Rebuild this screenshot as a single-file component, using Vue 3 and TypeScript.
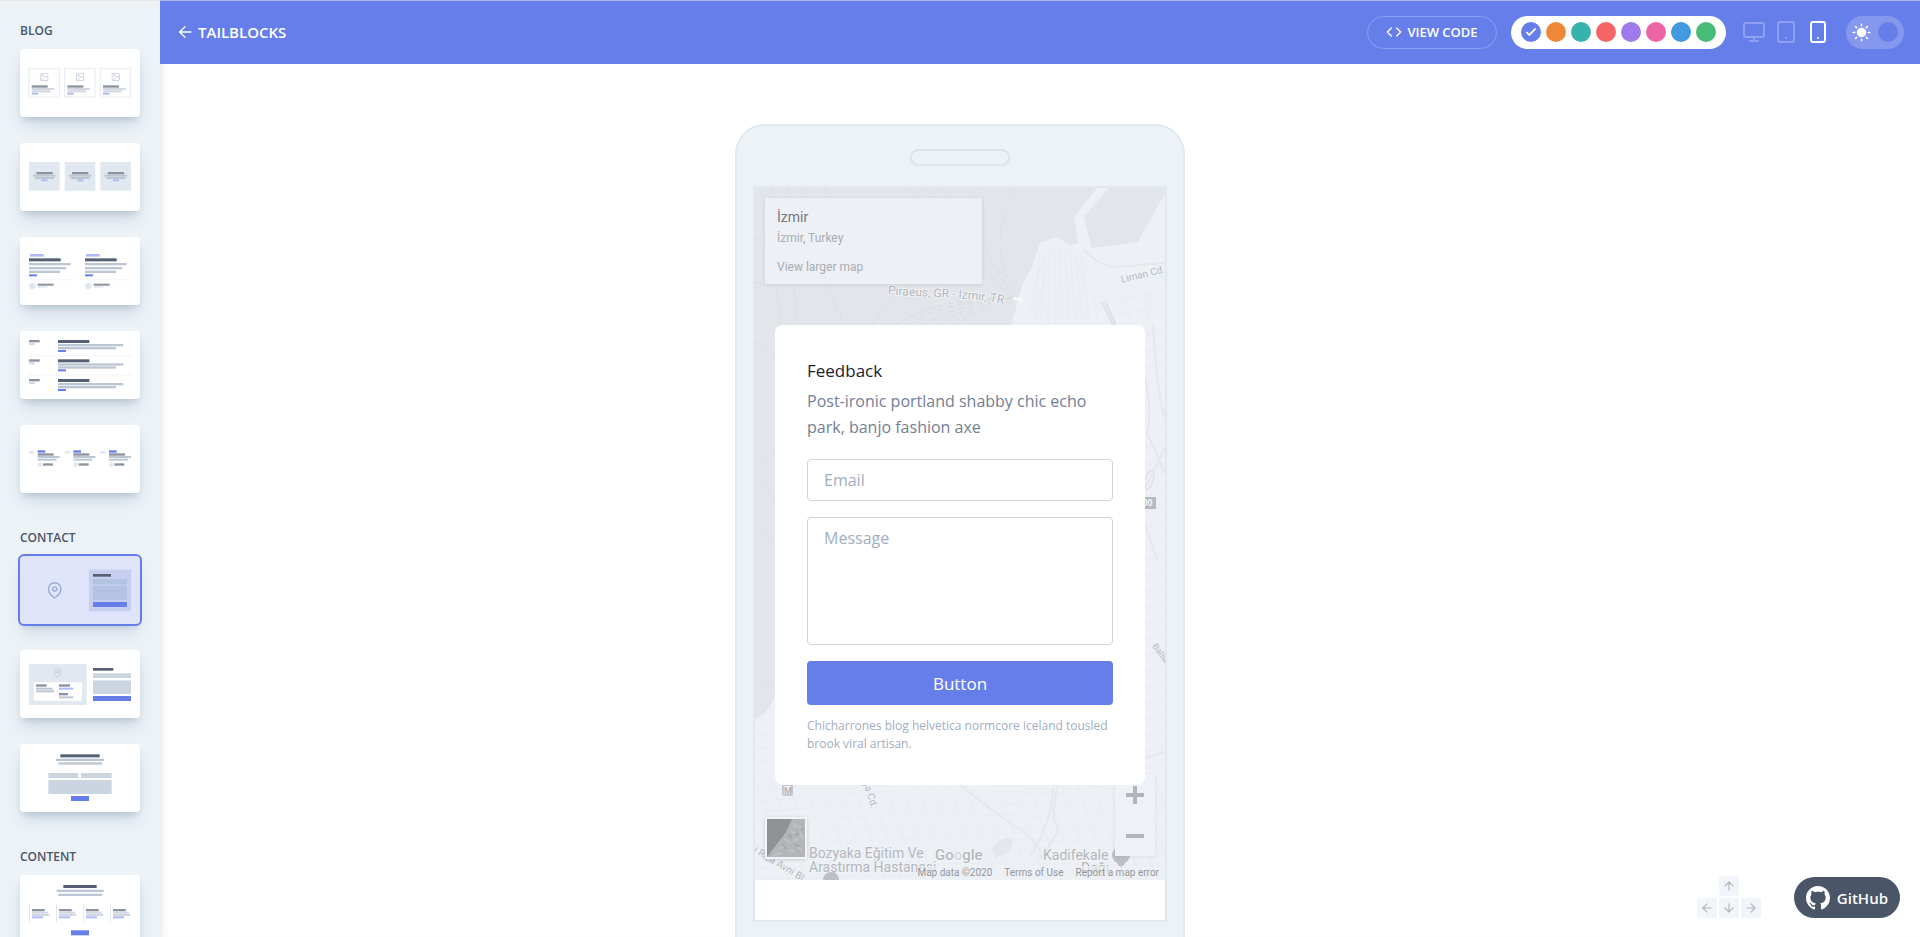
<script setup lang="ts">
import { ref } from 'vue'

type Tone = 'dark' | 'mid' | 'soft' | 'gray' | 'pale' | 'line' | 'field' | 'blue' | 'blueSoft' | 'white'
interface Bar { x: number; y: number; w: number; h: number; t: Tone; frame?: boolean; r?: number }
interface Glyph { kind: 'pin' | 'image'; x: number; y: number; s: number }
interface Thumb { id: string; bars: Bar[]; glyphs?: Glyph[]; selected?: boolean }

const b = (x: number, y: number, w: number, h: number, t: Tone): Bar => ({ x, y, w, h, t })
const dot = (cx: number, cy: number, r: number): Bar => ({ x: cx - r, y: cy - r, w: r * 2, h: r * 2, t: 'pale', r })

const blogA: Bar[] = [27, 134, 241].flatMap((x) => [
  { x, y: 58, w: 91, h: 86, t: 'pale' as Tone, frame: true },
  b(x + 8, 109, 48, 7, 'mid'), b(x + 8, 117, 68, 6, 'soft'),
  b(x + 8, 124, 57, 6, 'soft'), b(x + 8, 131, 19, 6, 'blueSoft'),
])
const blogB: Bar[] = [27, 134, 241].flatMap((x) => [
  b(x, 57, 92, 86, 'pale'), b(x + 22, 87, 49, 7, 'mid'), b(x + 12, 95, 68, 6, 'gray'),
  b(x + 18, 102, 57, 6, 'gray'), b(x + 37, 109, 19, 6, 'blueSoft'),
])
const blogC: Bar[] = [27, 195].flatMap((x) => [
  b(x + 3, 51, 41, 8, 'blueSoft'), b(x, 64, 95, 9, 'dark'), b(x, 78, 125, 7, 'gray'),
  b(x, 90, 111, 7, 'gray'), b(x, 101, 93, 7, 'gray'), b(x, 112, 24, 6, 'blue'),
  b(x, 126, 139, 4, 'line'), dot(x + 10, 147, 10), b(x + 26, 140, 48, 6, 'mid'), b(x + 26, 147, 29, 5, 'pale'),
])
const blogD: Bar[] = [
  ...[27, 85, 144].flatMap((y) => [
    b(27, y, 32, 7, 'mid'), b(27, y + 9, 17, 6, 'soft'), b(114, y, 94, 9, 'dark'),
    b(114, y + 12, 196, 7, 'gray'), b(114, y + 21, 174, 7, 'gray'), b(114, y + 30, 24, 6, 'blue'),
  ]),
  b(27, 72, 306, 4, 'line'), b(27, 130, 306, 4, 'line'),
]
const blogE: Bar[] = [27, 134, 241].flatMap((x) => [
  b(x, 78, 16, 8, 'pale'), b(x + 26, 76, 23, 7, 'blue'), b(x + 26, 85, 48, 7, 'mid'),
  b(x + 26, 93, 66, 6, 'gray'), b(x + 26, 101, 57, 6, 'gray'), dot(x + 33, 119, 7), b(x + 42, 115, 30, 7, 'mid'),
])
const contactA: Bar[] = [
  b(207, 41, 126, 125, 'soft'), b(219, 54, 54, 8, 'dark'), b(219, 69, 102, 16, 'field'),
  b(219, 90, 102, 42, 'field'), b(219, 138, 102, 15, 'blue'),
]
const contactB: Bar[] = [
  b(27, 42, 173, 123, 'pale'), b(41, 97, 145, 55, 'white'),
  b(48, 103, 32, 7, 'mid'), b(48, 113, 50, 6, 'gray'), b(48, 121, 54, 6, 'gray'),
  b(117, 103, 33, 7, 'mid'), b(117, 113, 43, 6, 'blueSoft'), b(117, 129, 27, 7, 'mid'), b(117, 139, 43, 6, 'gray'),
  b(219, 54, 61, 8, 'dark'), b(219, 70, 114, 14, 'field'), b(219, 91, 114, 41, 'field'), b(219, 138, 114, 15, 'blue'),
]
const contactC: Bar[] = [
  b(121, 31, 118, 9, 'dark'), b(108, 44, 144, 7, 'gray'), b(115, 55, 131, 7, 'gray'),
  b(85, 87, 90, 15, 'field'), b(183, 87, 92, 15, 'field'), b(85, 108, 190, 42, 'field'), b(153, 156, 54, 15, 'blue'),
]
const contentA: Bar[] = [
  b(130, 30, 100, 9, 'dark'), b(110, 44, 141, 7, 'gray'), b(115, 56, 131, 7, 'gray'),
  ...[27, 108, 189, 270].flatMap((x) => [
    b(x, 87, 3, 56, 'pale'), b(x + 9, 102, 38, 7, 'mid'), b(x + 9, 110, 48, 6, 'soft'),
    b(x + 9, 117, 52, 6, 'soft'), b(x + 9, 124, 33, 6, 'blueSoft'),
  ]),
  b(153, 166, 54, 15, 'blue'),
]

const groups: { name: string; thumbs: Thumb[] }[] = [
  {
    name: 'BLOG',
    thumbs: [
      { id: 'Blog A', bars: blogA, glyphs: [60, 167, 274].map((x) => ({ kind: 'image' as const, x, y: 71, s: 26 })) },
      { id: 'Blog B', bars: blogB },
      { id: 'Blog C', bars: blogC },
      { id: 'Blog D', bars: blogD },
      { id: 'Blog E', bars: blogE },
    ],
  },
  {
    name: 'CONTACT',
    thumbs: [
      { id: 'Contact A', bars: contactA, glyphs: [{ kind: 'pin', x: 79, y: 78, s: 50 }], selected: true },
      { id: 'Contact B', bars: contactB, glyphs: [{ kind: 'pin', x: 99, y: 55, s: 28 }] },
      { id: 'Contact C', bars: contactC },
    ],
  },
  { name: 'CONTENT', thumbs: [{ id: 'Content A', bars: contentA }] },
]

const colors = ['indigo', 'orange', 'teal', 'red', 'purple', 'pink', 'blue', 'green']
const activeColor = ref('indigo')
const dark = ref(false)
const email = ref('')
const message = ref('')
const keys = [
  { name: 'up', d: 'M12 19V5M5 12l7-7 7 7' },
  { name: 'left', d: 'M19 12H5M12 19l-7-7 7-7' },
  { name: 'down', d: 'M12 5v14M19 12l-7 7-7-7' },
  { name: 'right', d: 'M5 12h14M12 5l7 7-7 7' },
]
const streets = Array.from({ length: 26 }, (_, i) => i)
</script>

<template>
  <div class="app">
    <aside class="sidebar">
      <section v-for="g in groups" :key="g.name" class="group">
        <h2 class="group-name">{{ g.name }}</h2>
        <div class="thumbs">
          <button v-for="t in g.thumbs" :key="t.id" class="thumb" :class="{ selected: t.selected }" :aria-label="t.id">
            <svg viewBox="0 0 360 204">
              <rect
                v-for="(r, i) in t.bars" :key="i" :x="r.x" :y="r.y" :width="r.w" :height="r.h" :rx="r.r ?? 0"
                :class="r.frame ? 'frame' : r.t"
              />
              <svg
                v-for="(k, i) in t.glyphs ?? []" :key="'g' + i" :x="k.x" :y="k.y" :width="k.s" :height="k.s"
                viewBox="0 0 24 24" class="glyph"
              >
                <template v-if="k.kind === 'pin'">
                  <path d="M21 10c0 7-9 13-9 13s-9-6-9-13a9 9 0 0118 0z" />
                  <circle cx="12" cy="10" r="3" />
                </template>
                <template v-else>
                  <rect x="2" y="2" width="20" height="20" rx="2" />
                  <circle cx="8" cy="8" r="2" />
                  <path d="M22 15l-6-6L4 22" />
                </template>
              </svg>
            </svg>
          </button>
        </div>
      </section>
    </aside>

    <div class="pane">
      <header class="toolbar">
        <a href="#" class="brand">
          <svg viewBox="0 0 24 24" class="line-icon"><path d="M21 12H4M12 20l-8-8 8-8" /></svg>
          TAILBLOCKS
        </a>
        <button class="code-btn">
          <svg viewBox="0 0 24 24" class="line-icon"><path d="M16 18l6-6-6-6M8 6l-6 6 6 6" /></svg>
          VIEW CODE
        </button>
        <div class="palette">
          <button
            v-for="c in colors" :key="c" class="swatch" :class="c" :aria-label="c" @click="activeColor = c"
          >
            <svg v-if="c === activeColor" viewBox="0 0 24 24"><path d="M20 6L9 17l-5-5" /></svg>
          </button>
        </div>
        <div class="devices">
          <button class="device" aria-label="Desktop">
            <svg viewBox="0 0 24 24"><rect x="2" y="3" width="20" height="14" rx="2" /><path d="M8 21h8M12 17v4" /></svg>
          </button>
          <button class="device" aria-label="Tablet">
            <svg viewBox="0 0 24 24"><rect x="4" y="2" width="16" height="20" rx="2" /><path d="M12 18v.01" /></svg>
          </button>
          <button class="device on" aria-label="Phone">
            <svg viewBox="0 0 24 24"><rect x="5" y="2" width="14" height="20" rx="2" /><path d="M12 18v.01" /></svg>
          </button>
        </div>
        <label class="mode">
          <input v-model="dark" type="checkbox" aria-label="Dark mode" />
          <svg viewBox="0 0 24 24" class="sun">
            <circle cx="12" cy="12" r="5" />
            <path d="M12 1.5v2M12 20.5v2M4.6 4.6L6 6M18 18l1.4 1.4M1.5 12h2M20.5 12h2M4.6 19.4L6 18M18 6l1.4-1.4" />
          </svg>
          <span class="knob"></span>
        </label>
      </header>

      <main class="stage">
        <div class="phone">
          <div class="speaker"></div>
          <div class="screen">
            <section class="map-block">
              <svg class="map" viewBox="0 0 410 692" preserveAspectRatio="xMidYMid slice">
                <rect width="410" height="692" fill="#e2e5ea" />
                <path
                  d="M342 0L319 29L323 55L315 57L301 49L285 55L277 79L268 95L263 112L257 135L20 509Q12 526 0 531V692H410V5L383 54L337 60L329 29L354 0Z"
                  fill="#edf0f5"
                />
                <g class="ferry">
                  <path d="M17 0Q15 60 26 137M33 0Q34 60 43 137M50 0Q60 70 90 137M69 0Q72 8 73 12" />
                  <path d="M0 50L10 53M0 95H130M150 0L162 12M165 0L178 12M184 0L196 12M224 0L212 12" />
                  <path d="M260 0C244 35 240 55 252 87S256 105 258 110M227 55L258 110M227 78L258 110" />
                  <path d="M258 110Q180 110 140 137M258 110Q185 114 155 137M258 110Q195 118 170 137M258 110Q205 120 185 137M258 110Q215 124 202 137M118 137Q132 108 155 95" />
                  <path d="M0 153L20 166M20 262L0 283L20 312M0 334L20 354M2 501L20 496" />
                </g>
                <g class="roads">
                  <path d="M275 130Q280 70 300 62Q330 55 335 90Q345 130 340 140M282 130Q288 80 303 68Q325 65 328 95" />
                  <path v-for="n in 9" :key="'a' + n" :d="`M${280 + n * 5} 62L${272 + n * 7} 137`" />
                  <path v-for="n in 8" :key="'b' + n" :d="`M282 ${64 + n * 9}L332 ${68 + n * 9}`" />
                  <path d="M345 96L410 88M350 112L410 105M350 128L410 120M370 96L376 137M390 90L394 137" />
                  <path v-for="n in streets" :key="'c' + n" :d="`M${n * 16} 592L${n * 16 + 34} 692`" />
                  <path v-for="n in 9" :key="'d' + n" :d="`M0 ${592 + n * 11}Q200 ${560 + n * 14} 410 ${598 + n * 10}`" />
                  <path v-for="n in 30" :key="'e' + n" :d="`M390 ${100 + n * 16}L410 ${92 + n * 16}`" />
                  <path v-for="n in 4" :key="'f' + n" :d="`M0 ${535 + n * 13}L20 ${532 + n * 13}`" />
                </g>
                <g class="highways">
                  <path d="M329 62Q345 78 360 79L410 75" />
                  <path d="M390 190Q398 225 392 245L410 285M398 137Q402 210 410 230M390 300L410 260M390 337L402 372M390 570L410 564" />
                  <path d="M205 597Q240 625 264 641T285 670M298 600Q298 630 276 668M303 597C292 645 306 635 302 645L286 670" />
                </g>
                <ellipse cx="394" cy="292" rx="4" ry="10" transform="rotate(18 394 292)" fill="none" stroke="#e0e4ea" stroke-width="2" />
                <path d="M236 660Q252 646 258 651L255 664L240 670Z" fill="#e4e7ec" />
                <path d="M347 114L358 137M350 113L361 137" stroke="#dde1e6" stroke-width="2" fill="none" />
                <path d="M258 110L268 113" stroke="#f8f9fb" stroke-width="3" />
                <defs><path id="ferry-label" d="M133 106C170 110 214 108 254 117" /></defs>
                <g class="labels">
                  <text font-size="12"><textPath href="#ferry-label">Piraeus, GR - Izmir, TR</textPath></text>
                  <text x="367" y="95" font-size="10" transform="rotate(-14 367 95)">Liman Cd.</text>
                  <text x="397" y="458" font-size="9" transform="rotate(55 397 458)">Ballıkuyu</text>
                  <text x="108" y="594" font-size="10" transform="rotate(72 108 594)">şa Cd.</text>
                  <text x="-2" y="664" font-size="10" transform="rotate(31 -2 664)">i Rıza Avni Bl</text>
                  <text x="54" y="670" font-size="14">Bozyaka Eğitim Ve</text>
                  <text x="54" y="684" font-size="14">Araştırma Hastanesi</text>
                  <text x="288" y="672" font-size="14">Kadifekale</text>
                  <text x="326" y="685" font-size="14">Dağı</text>
                </g>
                <rect x="380" y="309" width="21" height="12" fill="#b7babf" />
                <text x="382" y="318" font-size="9" font-weight="700" fill="#f4f6f9">300</text>
                <rect x="28" y="597" width="9" height="10" rx="1" fill="#edf0f5" stroke="#c5c8cd" stroke-width="2" />
                <text x="29" y="606" font-size="9" font-weight="700" fill="#b2b5ba">M</text>
                <path d="M357 667a9 9 0 0018 0q0-7-9-9q-9 2-9 9M361 674l5 6 5-6z" fill="#bcbfc4" />
                <path d="M68 692a8 8 0 0116 0z" fill="#bcbfc4" />
                <text x="180" y="672" font-size="15" font-weight="500" fill="#b4b7bc" stroke="#f4f6f9" stroke-width="2" paint-order="stroke">Go<tspan fill="#d3d6db">o</tspan>gle</text>
              </svg>

              <div class="place">
                <strong>İzmir</strong>
                <span>İzmir, Turkey</span>
                <a href="#">View larger map</a>
              </div>
              <button class="satellite" aria-label="Satellite imagery">
                <svg viewBox="0 0 38 38">
                  <rect width="38" height="38" fill="#8f9195" />
                  <path d="M25 0L19 13L10 25L3 34L0 38H38V0Z" fill="#b3b5b9" />
                  <path d="M26 4l3 5M24 12l5 3M30 6l5 4M18 20l5 4M26 22l6-3M12 29l7-2M22 31l6 2M31 28l4 4M33 14l3 6M7 36l8-2" stroke="#c0c2c6" stroke-width="2" />
                  <path d="M21 15l4 4M28 26l5 1M16 25l3 5M34 9l3 2M28 16l4-2" stroke="#a4a6aa" stroke-width="2" />
                </svg>
              </button>
              <div class="zoom">
                <button aria-label="Zoom in"><svg viewBox="0 0 18 18"><path d="M9 0V18M0 9H18" /></svg></button>
                <button aria-label="Zoom out"><svg viewBox="0 0 18 18"><path d="M0 9H18" /></svg></button>
              </div>
              <div class="credits">
                <span>Map data ©2020</span>
                <a href="#">Terms of Use</a>
                <a href="#">Report a map error</a>
              </div>

              <form class="feedback" @submit.prevent>
                <h1>Feedback</h1>
                <p class="lead">Post-ironic portland shabby chic echo park, banjo fashion axe</p>
                <input v-model="email" type="email" placeholder="Email" aria-label="Email" />
                <textarea v-model="message" placeholder="Message" aria-label="Message"></textarea>
                <button class="submit">Button</button>
                <p class="note">Chicharrones blog helvetica normcore iceland tousled brook viral artisan.</p>
              </form>
            </section>
          </div>
        </div>
      </main>
    </div>

    <div class="corner">
      <div class="keys">
        <kbd v-for="k in keys" :key="k.name" :class="k.name">
          <svg viewBox="0 0 24 24"><path :d="k.d" /></svg>
        </kbd>
      </div>
      <a href="#" class="github">
        <svg viewBox="0 0 16 16">
          <path d="M8 0C3.58 0 0 3.58 0 8c0 3.54 2.29 6.53 5.47 7.59.4.07.55-.17.55-.38 0-.19-.01-.82-.01-1.49-2.01.37-2.53-.49-2.69-.94-.09-.23-.48-.94-.82-1.13-.28-.15-.68-.52-.01-.53.63-.01 1.08.58 1.23.82.72 1.21 1.87.87 2.33.66.07-.52.28-.87.51-1.07-1.78-.2-3.64-.89-3.64-3.95 0-.87.31-1.59.82-2.15-.08-.2-.36-1.02.08-2.12 0 0 .67-.21 2.2.82.64-.18 1.32-.27 2-.27s1.36.09 2 .27c1.53-1.04 2.2-.82 2.2-.82.44 1.1.16 1.92.08 2.12.51.56.82 1.27.82 2.15 0 3.07-1.87 3.75-3.65 3.95.29.25.54.73.54 1.48 0 1.07-.01 1.93-.01 2.2 0 .21.15.46.55.38A8.01 8.01 0 0016 8c0-4.42-3.58-8-8-8z" />
        </svg>
        GitHub
      </a>
    </div>
  </div>
</template>

<style>
body { margin: 0; background: #fff; }
</style>

<style scoped>
* { box-sizing: border-box; }
h1, h2, p { margin: 0; }
button { font: inherit; padding: 0; border: 0; background: none; cursor: pointer; }
a { text-decoration: none; color: inherit; }
svg { display: block; }

.app {
  display: flex;
  height: 100vh;
  overflow: hidden;
  font-family: "Open Sans", "Noto Sans", sans-serif;
}
.app::before {
  content: "";
  position: fixed;
  z-index: 5;
  top: 0;
  left: 0;
  right: 0;
  height: 1px;
  background: rgba(222, 222, 222, 0.6);
}

/* sidebar */
.sidebar {
  flex: 0 0 160px;
  display: flex;
  flex-direction: column;
  gap: 35px;
  padding: 21px 20px 0;
  overflow: hidden;
  background: #edf2f7;
}
.group-name { margin-bottom: 8px; font-size: 12px; line-height: 20px; font-weight: 600; color: #4a5568; }
.thumbs { display: flex; flex-direction: column; gap: 26px; }
.thumb {
  height: 68px;
  border-radius: 4px;
  background: #fff;
  box-shadow: 0 10px 15px -3px rgba(44, 82, 120, 0.18), 0 4px 6px -2px rgba(30, 90, 110, 0.16);
}
.thumb > svg { width: 100%; height: 68px; }
.thumb.selected { background: #dfe4fb; outline: 2px solid #667eea; }
.dark { fill: #566074; }
.mid { fill: #8b92a0; }
.gray { fill: #bcc6d2; }
.soft { fill: #d2d8e1; }
.pale { fill: #e2e8f0; }
.line { fill: #f4f6f9; }
.field { fill: #cbd5e0; }
.blue { fill: #667eea; }
.blueSoft { fill: #aebbf5; }
.white { fill: #fff; }
.frame { fill: #fff; stroke: #e6ebf2; stroke-width: 3; }
.selected .soft { fill: #c6cff0; }
.selected .field { fill: #b5c3e3; }
.glyph { fill: none; stroke: #b8c2d0; stroke-width: 2; }
.selected .glyph { stroke: #9aaad4; }

/* toolbar */
.pane { flex: 1; min-width: 0; display: flex; flex-direction: column; box-shadow: inset 7px 0 8px -6px rgba(100, 120, 150, 0.2); }
.toolbar {
  display: flex;
  align-items: center;
  height: 64px;
  flex: none;
  padding: 0 16px 0 17px;
  background: #667eea;
  color: #fff;
}
.line-icon { fill: none; stroke: currentColor; stroke-width: 2; stroke-linecap: round; stroke-linejoin: round; }
.brand { display: flex; align-items: center; gap: 5px; margin-right: auto; font-size: 15px; line-height: 20px; font-weight: 600; }
.brand svg { width: 16px; height: 16px; stroke-width: 2; }
.code-btn {
  display: flex;
  align-items: center;
  justify-content: center;
  gap: 5px;
  width: 130px;
  height: 33px;
  border: 1px solid #8c9eef;
  border-radius: 17px;
  color: #fff;
  font-size: 13px;
  font-weight: 600;
}
.code-btn svg { width: 16px; height: 16px; }
.palette { display: flex; align-items: center; gap: 5px; height: 33px; margin-left: 14px; padding: 0 10px; border-radius: 17px; background: #fff; }
.swatch { width: 20px; height: 20px; border-radius: 50%; }
.swatch svg { width: 14px; height: 14px; margin: auto; fill: none; stroke: #fff; stroke-width: 3; }
.indigo { background: #667eea; }
.orange { background: #ed8936; }
.teal { background: #38b2ac; }
.red { background: #f56565; }
.purple { background: #9f7aea; }
.pink { background: #ed64a6; }
.swatch.blue { background: #4299e1; }
.green { background: #48bb78; }
.devices { display: flex; gap: 8px; margin-left: 16px; }
.device { width: 24px; height: 24px; color: #8fa0f0; }
.device svg { width: 24px; height: 24px; fill: none; stroke: currentColor; stroke-width: 2; stroke-linecap: round; stroke-linejoin: round; }
.device.on { color: #fff; }
.mode {
  display: flex;
  align-items: center;
  justify-content: space-between;
  width: 58px;
  height: 33px;
  margin-left: 16px;
  padding: 0 6px;
  border-radius: 17px;
  background: #8598ee;
  cursor: pointer;
}
.mode input { position: absolute; opacity: 0; width: 1px; height: 1px; margin: 0; }
.sun { width: 19px; height: 19px; fill: #fff; stroke: #fff; stroke-width: 2; stroke-linecap: round; }
.knob { width: 20px; height: 20px; border-radius: 50%; background: #667eea; }

/* phone */
.stage { flex: 1; min-height: 0; display: flex; justify-content: center; align-items: flex-start; overflow: hidden; padding: 60px 160px 60px 0; }
.phone { flex: 0 1 450px; padding: 23px 16px 60px; border: 2px solid #e2e8f0; border-radius: 30px; background: #edf2f7; }
.speaker { width: 100px; height: 17px; margin: 0 auto 20px; border: 2px solid #dce4ec; border-radius: 9px; }
.screen { padding-bottom: 40px; border: 2px solid #e2e8f0; background: #fff; }
.map-block { position: relative; padding: 137px 20px 95px; overflow: hidden; font-family: Roboto, sans-serif; }
.map { position: absolute; inset: 0; width: 100%; height: 100%; }
.ferry path { fill: none; stroke: #d9dce0; stroke-width: 1; stroke-dasharray: 6 4; }
.roads path { fill: none; stroke: #e6e9ef; stroke-width: 1; opacity: 0.5; }
.highways path { fill: none; stroke: #e4e8ed; stroke-width: 2; }
.labels { fill: #b4b7bc; stroke: #f0f3f7; stroke-width: 2; paint-order: stroke; }
.place {
  position: absolute;
  top: 10px;
  left: 10px;
  width: 217px;
  height: 86px;
  padding: 9px 12px;
  display: flex;
  flex-direction: column;
  background: #edf0f5;
  box-shadow: 0 1px 4px rgba(0, 0, 0, 0.1);
  color: #a9acb1;
  font-size: 12px;
  line-height: 18px;
}
.place strong { margin-bottom: 2px; font-size: 14px; line-height: 20px; font-weight: 400; color: #75787c; }
.place a { margin-top: 11px; }
.satellite { position: absolute; left: 10px; bottom: 21px; width: 42px; height: 42px; border: 2px solid #f2f4f8; box-shadow: 0 1px 4px rgba(0, 0, 0, 0.15); }
.satellite svg { width: 38px; height: 38px; }
.zoom { position: absolute; right: 10px; bottom: 24px; display: flex; flex-direction: column; width: 40px; background: #eef1f6; box-shadow: 0 1px 4px rgba(0, 0, 0, 0.07); }
.zoom button { height: 41px; display: grid; place-items: center; }
.zoom svg { width: 18px; height: 18px; fill: none; stroke: #b1b4b9; stroke-width: 4; }
.credits { position: absolute; right: 6px; bottom: 0; display: flex; gap: 12px; font-size: 10px; line-height: 14px; color: #94979b; background: rgba(237, 240, 245, 0.6); white-space: nowrap; }

/* form */
.feedback {
  position: relative;
  display: flex;
  flex-direction: column;
  padding: 32px;
  border-radius: 8px;
  background: #fff;
  font-family: "Open Sans", "Noto Sans", sans-serif;
}
.feedback h1 { margin-bottom: 3px; font-size: 17px; line-height: 28px; font-weight: 400; color: #1a202c; }
.lead { margin-bottom: 19px; font-size: 16px; line-height: 26px; color: #718096; }
.feedback input, .feedback textarea {
  display: block;
  width: 100%;
  margin: 0 0 16px;
  padding: 8px 16px;
  border: 1px solid #cbd5e0;
  border-radius: 4px;
  background: #fff;
  font: 16px/24px "Open Sans", "Noto Sans", sans-serif;
  color: #4a5568;
  resize: none;
}
.feedback input { height: 42px; }
.feedback textarea { height: 128px; }
.feedback ::placeholder { color: #a0aec0; opacity: 1; }
.submit { height: 44px; border-radius: 4px; background: #667eea; color: #fff; font-size: 17px; }
.note { margin-top: 12px; font-size: 12px; line-height: 18px; color: #a0aec0; }

/* corner widgets */
.corner { position: fixed; right: 20px; bottom: 19px; display: flex; align-items: flex-end; gap: 33px; }
.keys { display: grid; grid-template-columns: repeat(3, 20px); grid-template-areas: ". up ." "left down right"; gap: 2px; }
kbd { display: grid; place-items: center; height: 20px; border-radius: 3px; background: #f1f4f9; }
kbd svg { width: 14px; height: 14px; fill: none; stroke: #b2b5ba; stroke-width: 2; stroke-linecap: round; stroke-linejoin: round; }
.up { grid-area: up; }
.left { grid-area: left; }
.down { grid-area: down; }
.right { grid-area: right; }
.github {
  display: flex;
  align-items: center;
  gap: 7px;
  height: 41px;
  padding: 0 12px;
  border-radius: 21px;
  background: #4a5568;
  color: #fff;
  font-size: 15px;
  font-weight: 600;
}
.github svg { width: 24px; height: 24px; fill: #fff; }
</style>
